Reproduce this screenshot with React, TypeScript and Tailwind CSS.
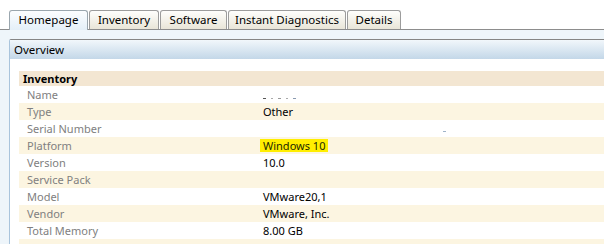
const tabs = [
  { label: "Homepage", w: "w-[79px]", active: true },
  { label: "Inventory", w: "w-[70px]", active: false },
  { label: "Software", w: "w-[67px]", active: false },
  { label: "Instant Diagnostics", w: "w-[118px]", active: false },
  { label: "Details", w: "w-[54px]", active: false },
];

type Row = { label: string; value?: string; mark?: "name" | "serial" | "hl" };

const rows: Row[] = [
  { label: "Name", mark: "name" },
  { label: "Type", value: "Other" },
  { label: "Serial Number", mark: "serial" },
  { label: "Platform", value: "Windows 10", mark: "hl" },
  { label: "Version", value: "10.0" },
  { label: "Service Pack" },
  { label: "Model", value: "VMware20,1" },
  { label: "Vendor", value: "VMware, Inc." },
  { label: "Total Memory", value: "8.00 GB" },
  { label: "" },
];

function Redacted() {
  // blurred / hidden host name, only a few specks remain
  return (
    <span className="flex items-end gap-[5px] h-[14px] pb-[3px]">
      <span className="w-[3px] h-[1px] bg-[#555]" />
      <span className="w-[2px] h-[1px] bg-[#aaa]" />
      <span className="w-[3px] h-[1px] bg-[#999]" />
      <span className="w-[2px] h-[1px] bg-[#aaa]" />
      <span className="w-[3px] h-[1px] bg-[#8a9ab0]" />
    </span>
  );
}

export default function App() {
  return (
    <div className="w-[604px] h-[244px] overflow-hidden bg-white text-[11.5px] text-black font-['Segoe_UI','Noto_Sans',sans-serif]">
      {/* tab strip */}
      <div className="h-[30px] flex items-end pl-[9px] border-b border-[#8d8d8d]">
        {tabs.map((t) => (
          <div
            key={t.label}
            className={
              t.active
                ? `${t.w} h-[20px] -mb-px pb-px flex items-center justify-center rounded-t-[3px] border border-b-0 border-[#9aa6ae] bg-gradient-to-b from-[#fbfdff] to-[#e4eff8] leading-none`
                : `${t.w} h-[19px] ml-px flex items-center justify-center rounded-t-[3px] border border-b-0 border-[#9c9c9c] bg-gradient-to-b from-[#fefefc] to-[#e9e5d8] leading-none`
            }
          >
            {t.label}
          </div>
        ))}
      </div>

      {/* body */}
      <div className="bg-[#eef5fa] pt-[9px] h-[214px]">
        <div className="ml-[9px] h-full border-t border-l border-t-[#858585] border-l-[#a9c4dc] rounded-tl-[2px] bg-white">
          <div className="h-[19px] flex items-center pl-[4px] bg-gradient-to-b from-[#f2f7fb] to-[#c3d7e8] leading-none">
            Overview
          </div>

          <div className="pt-[12px] pl-[9px] text-[11px]">
            <div className="h-[15px] flex items-center pl-[4px] bg-[#f3e6d2] font-bold leading-none">
              Inventory
            </div>
            {rows.map((r, i) => (
              <div
                key={i}
                className={`h-[17px] flex items-center pl-[8px] leading-none ${
                  i % 2 === 1 ? "bg-[#fcf5e1]" : "bg-white"
                }`}
              >
                <span className="w-[236px] text-[#808080]">{r.label}</span>
                {r.mark === "name" && <Redacted />}
                {r.mark === "serial" && (
                  <span className="ml-[180px] mt-[6px] w-[3px] h-[1px] bg-[#9fb3c8]" />
                )}
                {r.mark === "hl" && (
                  <span className="-ml-[3px] px-[3px] h-[13px] flex items-center bg-[#ffee00] text-[#1d2a00]">
                    {r.value}
                  </span>
                )}
                {!r.mark && r.value && <span>{r.value}</span>}
              </div>
            ))}
          </div>
        </div>
      </div>
    </div>
  );
}
